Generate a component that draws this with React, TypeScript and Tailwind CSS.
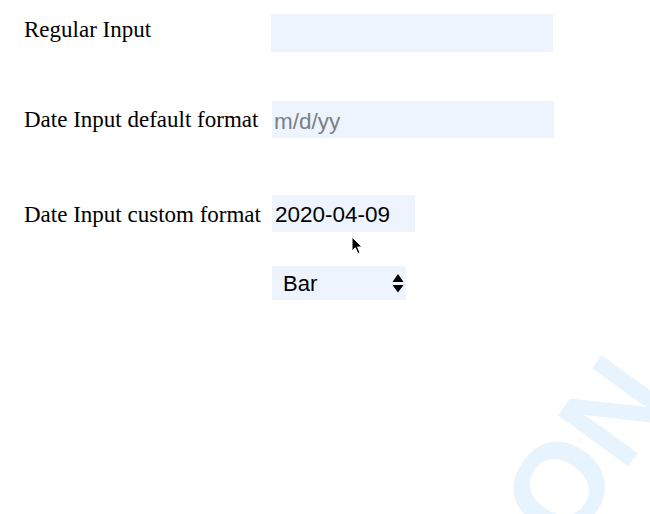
import React from "react";

const serif = { fontFamily: '"Liberation Serif", "Times New Roman", serif' };
const sans = { fontFamily: '"Liberation Sans", Arial, sans-serif' };

function Cursor() {
  return (
    <svg
      className="absolute left-[351px] top-[236px]"
      width="13"
      height="19"
      viewBox="0 0 13 19"
    >
      <path
        d="M1 1 L1 15 L4.3 11.8 L6.8 17.6 L9 16.7 L6.6 11 L11 11 Z"
        fill="#000"
        stroke="#fff"
        strokeWidth="1"
        strokeLinejoin="round"
      />
    </svg>
  );
}

export default function App() {
  return (
    <div className="relative w-[650px] h-[514px] overflow-hidden bg-white">
      <span
        aria-hidden="true"
        className="absolute left-[480px] top-[490px] origin-top-left rotate-[-54deg] whitespace-nowrap text-[126px] leading-none font-bold text-[#e8f4fd] select-none"
        style={sans}
      >
        ON
      </span>

      <div className="relative flex flex-col pl-[24px] pt-[14px]">
        <div className="flex items-start">
          <label
            className="w-[247px] h-[38px] leading-[38px] text-[23px] text-black -mt-[3px]"
            style={serif}
          >
            Regular Input
          </label>
          <input
            type="text"
            className="w-[282px] h-[38px] bg-[#edf4fe] pl-[3px] pt-[4px] text-[22.5px] text-black outline-none"
            style={sans}
          />
        </div>

        <div className="mt-[49px] flex items-start">
          <label
            className="w-[248px] h-[38px] leading-[38px] text-[23px] text-black whitespace-nowrap"
            style={serif}
          >
            Date Input default format
          </label>
          <input
            type="text"
            placeholder="m/d/yy"
            className="w-[282px] h-[37px] bg-[#edf4fe] pl-[2px] pt-[4px] text-[22.5px] text-black placeholder:text-[#7b7f86] outline-none"
            style={sans}
          />
        </div>

        <div className="mt-[56px] flex items-start">
          <label
            className="w-[248px] h-[37px] leading-[38px] text-[23px] text-black whitespace-nowrap mt-[1px]"
            style={serif}
          >
            Date Input custom format
          </label>
          <input
            type="text"
            defaultValue="2020-04-09"
            className="w-[143px] h-[37px] bg-[#edf4fe] pl-[3px] pt-[2px] text-[22.5px] text-black outline-none"
            style={sans}
          />
        </div>

        <div className="mt-[33px] flex pl-[248px]">
          <div
            className="w-[134px] h-[34px] bg-[#edf4fe] flex items-center justify-between pl-[11px] pr-[2px] text-[22px] text-black"
            style={sans}
          >
            <span className="pt-[1px]">Bar</span>
            <svg width="12" height="20" viewBox="0 0 12 20">
              <path d="M6 1 L11.5 9 L0.5 9 Z" fill="#000" />
              <path d="M0.5 12 L11.5 12 L6 19.5 Z" fill="#000" />
            </svg>
          </div>
        </div>
      </div>

      <Cursor />
    </div>
  );
}
